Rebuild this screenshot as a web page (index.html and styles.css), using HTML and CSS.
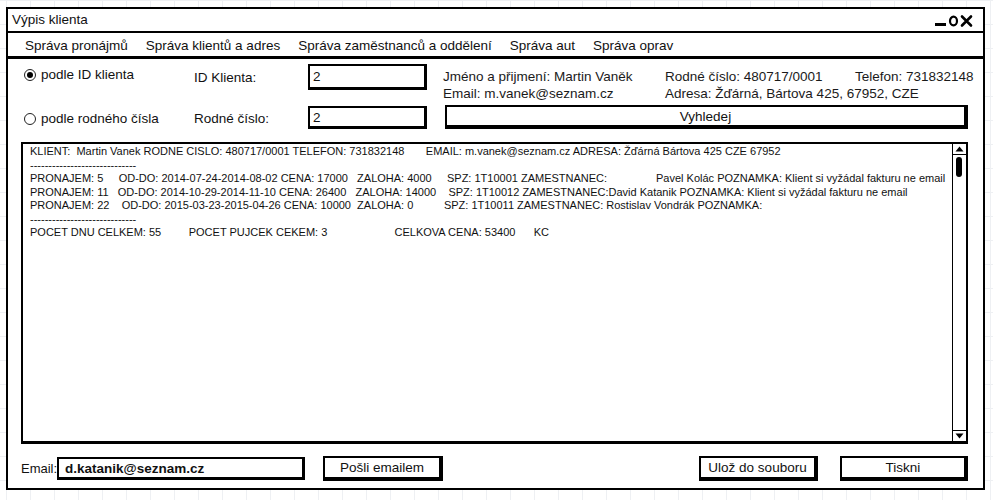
FILE: index.html
```html
<!DOCTYPE html>
<html lang="cs">
<head>
<meta charset="utf-8">
<title>Výpis klienta</title>
<link rel="stylesheet" href="styles.css">
</head>
<body>
<div class="window">
  <div class="titlebar">
    <span class="title">Výpis klienta</span>
    <svg class="controls" width="42" height="14" viewBox="0 0 42 14">
      <rect x="0" y="9" width="11" height="3" fill="#000"/>
      <ellipse cx="18.5" cy="7" rx="3.5" ry="4.3" fill="none" stroke="#000" stroke-width="2.2"/>
      <path d="M27 2.5 L36 11.5 M36 2.5 L27 11.5" stroke="#000" stroke-width="2.6" stroke-linecap="round"/>
    </svg>
  </div>
  <nav class="menubar">
    <span class="menu-item">Správa pronájmů</span>
    <span class="menu-item">Správa klientů a adres</span>
    <span class="menu-item">Správa zaměstnanců a oddělení</span>
    <span class="menu-item">Správa aut</span>
    <span class="menu-item">Správa oprav</span>
  </nav>
  <main class="content">
    <section class="search">
      <label class="radio radio-top"><span class="radio-dot checked"></span>podle ID klienta</label>
      <span class="field-label label-top">ID Klienta:</span>
      <div class="input input-top">2</div>
      <div class="info">
        <div class="info-line">
          <span class="info-c1">Jméno a přijmení: Martin Vaněk</span>
          <span class="info-c2">Rodné číslo: 480717/0001</span>
          <span class="info-c3">Telefon: 731832148</span>
        </div>
        <div class="info-line">
          <span class="info-c1">Email: m.vanek@seznam.cz</span>
          <span class="info-c2">Adresa: Žďárná, Bártova 425, 67952, CZE</span>
        </div>
      </div>

      <label class="radio radio-bottom"><span class="radio-dot"></span>podle rodného čísla</label>
      <span class="field-label label-bottom">Rodné číslo:</span>
      <div class="input input-bottom">2</div>
      <div class="button search-button">Vyhledej</div>
    </section>

    <div class="output">
      <div class="output-text"><div class="line">KLIENT:  Martin Vanek RODNE CISLO: 480717/0001 TELEFON: 731832148       EMAIL: m.vanek@seznam.cz ADRESA: Žďárná Bártova 425 CZE 67952</div><div class="line">-----------------------------</div><div class="line">PRONAJEM: 5     OD-DO: 2014-07-24-2014-08-02 CENA: 17000   ZALOHA: 4000     SPZ: 1T10001 ZAMESTNANEC:                Pavel Kolác POZNAMKA: Klient si vyžádal fakturu ne email</div><div class="line">PRONAJEM: 11   OD-DO: 2014-10-29-2014-11-10 CENA: 26400   ZALOHA: 14000    SPZ: 1T10012 ZAMESTNANEC:David Katanik POZNAMKA: Klient si vyžádal fakturu ne email</div><div class="line">PRONAJEM: 22    OD-DO: 2015-03-23-2015-04-26 CENA: 10000  ZALOHA: 0          SPZ: 1T10011 ZAMESTNANEC: Rostislav Vondrák POZNAMKA:</div><div class="line">-----------------------------</div><div class="line">POCET DNU CELKEM: 55         POCET PUJCEK CEKEM: 3                      CELKOVA CENA: 53400      KC</div></div>
      <div class="scrollbar">
        <div class="scroll-btn scroll-up"><svg width="9" height="6" viewBox="0 0 9 6"><path d="M0.5 5.5 L4.5 0.5 L8.5 5.5 Z" fill="#000"/></svg></div>
        <div class="scroll-track"><div class="scroll-thumb"></div></div>
        <div class="scroll-btn scroll-down"><svg width="9" height="6" viewBox="0 0 9 6"><path d="M0.5 0.5 L4.5 5.5 L8.5 0.5 Z" fill="#000"/></svg></div>
      </div>
    </div>

    <div class="actions">
      <span class="email-label">Email:</span>
      <div class="input email-input">d.katanik@seznam.cz</div>
      <div class="button send-button">Pošli emailem</div>
      <div class="spacer"></div>
      <div class="button save-button">Ulož do souboru</div>
      <div class="button print-button">Tiskni</div>
    </div>
  </main>
</div>
</body>
</html>
```

FILE: styles.css
```css
* { box-sizing: border-box; }

html, body {
  margin: 0;
  height: 100%;
}

body {
  font-family: "Liberation Sans", Arial, sans-serif;
  color: #111;
  background-color: #ffffff;
  background-image:
    linear-gradient(to right, #eef0f3 1px, transparent 1px),
    linear-gradient(to bottom, #eef0f3 1px, transparent 1px);
  background-size: 24px 24px;
  background-position: 6px 0;
  padding: 7px 0 0 6px;
}

.window {
  width: 979px;
  height: 483px;
  border: 2px solid #000;
  background: #fff;
  display: flex;
  flex-direction: column;
}

.titlebar {
  height: 24px;
  border-bottom: 2px solid #000;
  display: flex;
  align-items: center;
  justify-content: space-between;
  padding: 0 6px 0 4px;
}

.title {
  font-size: 13.5px;
  line-height: 22px;
}

.controls {
  display: block;
  margin-top: 1px;
}

.menubar {
  height: 26px;
  border-bottom: 3px solid #000;
  display: flex;
  align-items: center;
  gap: 18px;
  padding: 1px 0 0 17px;
  font-size: 13.5px;
  white-space: nowrap;
}

.content {
  flex: 1;
  display: flex;
  flex-direction: column;
  padding: 5px 15px 7px 13px;
}

.search {
  display: grid;
  grid-template-columns: 173px 114px 119px 1fr;
  grid-template-rows: 41px 24px;
  font-size: 13.5px;
}

.radio {
  display: flex;
  align-items: center;
  gap: 5px;
  padding-left: 3px;
  line-height: 15px;
  align-self: start;
  white-space: nowrap;
}

.radio-top { margin-top: 3px; }
.radio-bottom { margin-top: 6px; }

.radio-dot {
  width: 12px;
  height: 12px;
  border: 1.5px solid #222;
  border-radius: 50%;
  display: flex;
  align-items: center;
  justify-content: center;
  flex-shrink: 0;
}

.radio-dot.checked::after {
  content: "";
  width: 6px;
  height: 6px;
  border-radius: 50%;
  background: #000;
}

.field-label {
  line-height: 15px;
  align-self: start;
  white-space: nowrap;
}

.label-top { margin-top: 6px; }
.label-bottom { margin-top: 6px; }

.input {
  border-style: solid;
  border-color: #000;
  border-width: 2px 3px 3px 2px;
  background: #fff;
  padding-left: 3px;
  font-size: 13.5px;
  display: flex;
  align-items: center;
}

.input-top {
  height: 26px;
  align-self: start;
}

.input-bottom {
  height: 23px;
  margin-top: 1px;
  align-self: start;
}

.info {
  padding-left: 16px;
  margin-top: 4px;
  line-height: 17px;
  color: #1a1a1a;
  white-space: nowrap;
  min-width: 0;
}

.info-line { display: flex; }
.info-c1 { width: 222px; flex-shrink: 0; }
.info-c2 { width: 190px; flex-shrink: 0; }
.info-c3 { flex-shrink: 0; }

.button {
  border-style: solid;
  border-color: #000;
  border-width: 2px 4px 4px 2px;
  background: #fff;
  display: flex;
  align-items: center;
  justify-content: center;
  font-size: 13.5px;
  white-space: nowrap;
}

.search-button {
  margin-left: 18px;
  height: 24px;
}

.output {
  margin-top: 13px;
  height: 302px;
  border: 2px solid #000;
  border-bottom-width: 3px;
  display: flex;
}

.output-text {
  flex: 1;
  padding: 1px 0 0 7px;
  font-size: 11px;
  line-height: 13.5px;
  white-space: pre;
  overflow: hidden;
  color: #111;
}

.scrollbar {
  width: 14px;
  border-left: 1.5px solid #000;
  display: flex;
  flex-direction: column;
}

.scroll-btn {
  height: 11px;
  display: flex;
  align-items: center;
  justify-content: center;
}

.scroll-up { border-bottom: 1.5px solid #000; }
.scroll-down { border-top: 1.5px solid #000; }

.scroll-track {
  flex: 1;
  padding: 2px 0 0 3px;
}

.scroll-thumb {
  width: 6px;
  height: 20px;
  border-radius: 3px;
  background: #000;
}

.actions {
  margin-top: 12px;
  height: 25px;
  display: flex;
  align-items: center;
  font-size: 13.5px;
}

.email-label {
  width: 36px;
  font-size: 13px;
}

.email-input {
  width: 248px;
  height: 23px;
  font-weight: bold;
  padding-left: 6px;
}

.send-button {
  margin-left: 18px;
  width: 120px;
  height: 25px;
}

.spacer { flex: 1; }

.save-button {
  width: 119px;
  height: 25px;
}

.print-button {
  margin-left: 22px;
  width: 128px;
  height: 25px;
}
```
